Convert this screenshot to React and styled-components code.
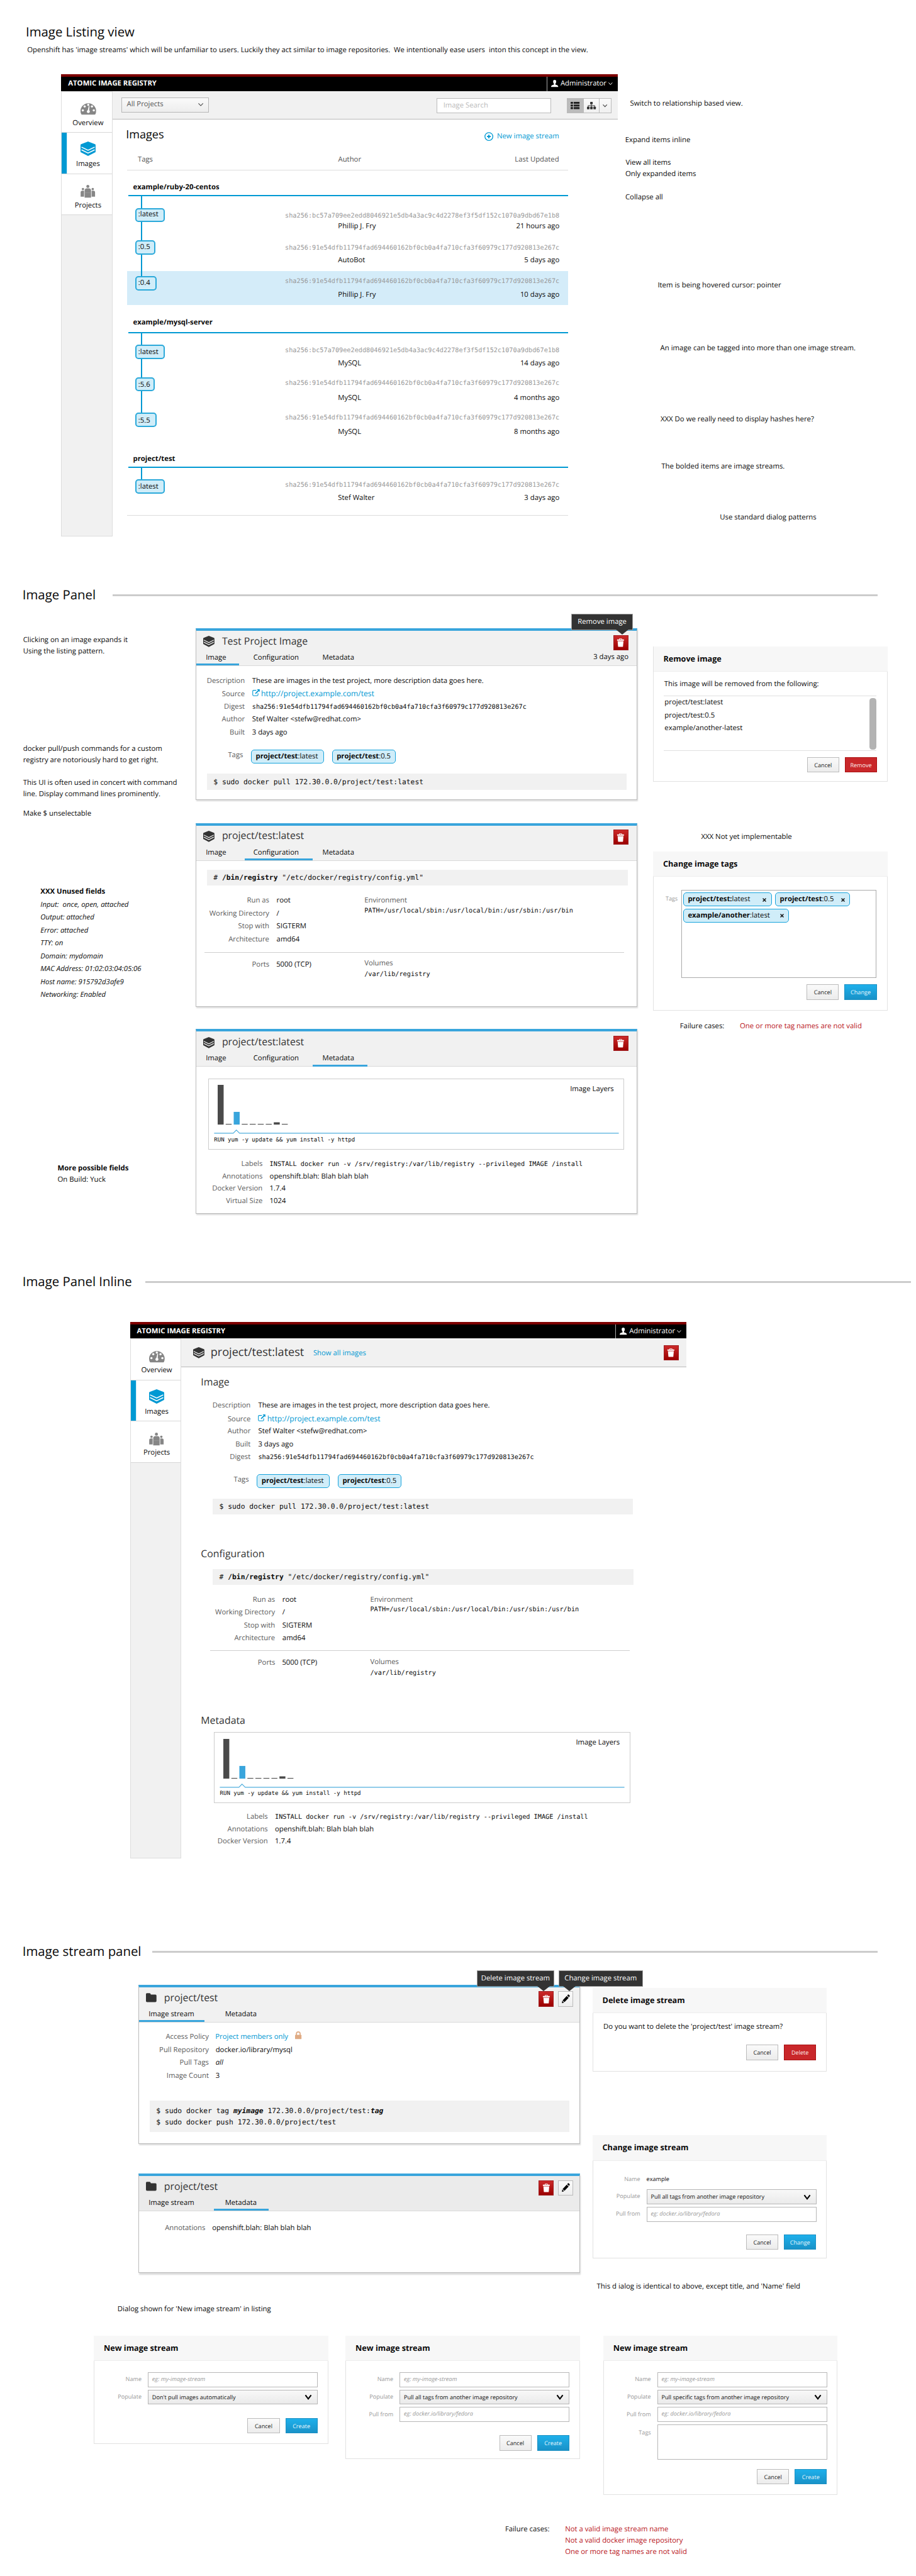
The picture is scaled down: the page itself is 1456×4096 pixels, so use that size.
import React from "react";
import styled, { createGlobalStyle, css } from "styled-components";

const SANS = '"Open Sans", "Noto Sans", sans-serif';
const MONO = '"DejaVu Sans Mono", monospace';
const BLUE = "#0099d3";
const PANEL_BLUE = "#39a5dc";

const GlobalStyle = createGlobalStyle`
  body { margin: 0; background: #fff; }
  *, *::before, *::after { box-sizing: border-box; }
`;

/* ---------- page scaffolding ---------- */

const Page = styled.div`
  zoom: 0.91;
  width: 1600px;
  height: 4500px;
  overflow: hidden;
  background: #fff;
  color: #0a0a0a;
  font: 12.45px/20px ${SANS};
  text-rendering: geometricPrecision;
  white-space: pre;
`;

const Columns = styled.div`
  display: flex;
  align-items: flex-start;
  height: ${(p) => (p.$height ? p.$height + "px" : "auto")};
  margin-top: ${(p) => p.$gap || 0}px;
  margin-left: ${(p) => p.$indent || 0}px;
`;

const Column = styled.div`
  display: flex;
  flex-direction: column;
  flex: none;
  width: ${(p) => p.$width}px;
`;

const PageTitle = styled.h1`
  margin: ${(p) => p.$gap || 0}px 0 0 45px;
  font-size: 22.4px;
  font-weight: 400;
  line-height: 30.8px;
`;

const SectionHead = styled.div`
  display: flex;
  align-items: center;
  height: 30px;
  margin: ${(p) => p.$gap}px 0 0 39.3px;
`;

const SectionTitle = styled.h2`
  flex: none;
  width: ${(p) => p.$width}px;
  margin: 0;
  font-size: 22.4px;
  font-weight: 400;
  line-height: 30.8px;
`;

const Rule = styled.div`
  width: ${(p) => p.$width}px;
  height: 3.2px;
  margin-top: 4px;
  background: #ccc;
`;

const Note = styled.p`
  margin: ${(p) => p.$gap || 0}px 0 0 ${(p) => p.$indent || 0}px;
  font-size: 12.52px;
  line-height: 20px;
  font-weight: ${(p) => (p.$bold ? 700 : 400)};
  font-style: ${(p) => (p.$italic ? "italic" : "normal")};
`;

const Failures = styled.div`
  display: flex;
  margin: ${(p) => p.$gap}px 0 0 ${(p) => p.$indent}px;
  & > span {
    width: 104.7px;
  }
  & > div {
    color: #b9151b;
  }
`;

/* ---------- icons ---------- */

const Glyph = styled.svg`
  display: block;
  flex: none;
  overflow: visible;
`;

const StackIcon = ({ w = 26.3, h = 25.3, bg = "#fff", color = BLUE }) => (
  <Glyph width={w} height={h} viewBox="0 0 26 25" preserveAspectRatio="none">
    <path d="M13 0 L25 4.6 Q26 5 26 6 V17.6 Q26 18.4 25.2 18.8 L13 25 L.8 18.8 Q0 18.4 0 17.6 V6 Q0 5 1 4.6z" fill={color} />
    <path d="M1.6 9.6 L13 15.2 L24.4 9.6 M1.6 14.4 L13 20 L24.4 14.4" fill="none" stroke={bg} strokeWidth="1.7" />
  </Glyph>
);

const GaugeIcon = () => (
  <Glyph width="27.2" height="21.3" viewBox="0 0 27 21">
    <path d="M2.4 21 Q1.6 21 1.2 20.2 A13.5 13.4 0 1 1 25.8 20.2 Q25.4 21 24.6 21z" fill="#868686" />
    <g fill="#fff">
      <circle cx="4" cy="13.6" r="1.9" />
      <circle cx="7.2" cy="6.8" r="1.9" />
      <circle cx="13.4" cy="4" r="1.9" />
      <circle cx="19.8" cy="6.8" r="1.9" />
      <circle cx="23" cy="13.6" r="1.9" />
      <path d="M14.4 6 L15.6 6.2 L14.9 13.4 A2.6 2.6 0 1 1 12.6 13.2z" />
    </g>
  </Glyph>
);

const PeopleIcon = () => (
  <Glyph width="25.6" height="22.8" viewBox="0 0 26 23" fill="#868686">
    <circle cx="13" cy="2.6" r="2.7" />
    <circle cx="4.3" cy="7.2" r="2.1" />
    <circle cx="21.7" cy="7.2" r="2.1" />
    <path d="M7.3 22.6 V10.2 Q7.3 6.4 11 6.2 H15 Q18.7 6.4 18.7 10.2 V22.6z" />
    <path d="M.2 21 V13.4 Q.2 10.2 3 10.2 H6.3 V21z M25.8 21 V13.4 Q25.8 10.2 23 10.2 H19.7 V21z" />
    <path d="M7.3 14 H18.7" stroke="#a5a5a5" strokeWidth=".5" />
  </Glyph>
);

const TrashIcon = () => (
  <Glyph width="14" height="15" viewBox="0 0 14 15" fill="#fff">
    <path d="M4.4 2 V1 Q4.4 .2 5.2 .2 H8.8 Q9.6 .2 9.6 1 V2 H13 V4 H1 V2z M5.4 2 H8.6 V1.2 H5.4z" fillRule="evenodd" />
    <path d="M1.9 5 H12.1 L11.3 14.2 Q11.2 14.8 10.6 14.8 H3.4 Q2.8 14.8 2.7 14.2z" />
  </Glyph>
);

const PencilIcon = () => (
  <Glyph width="14" height="16" viewBox="0 0 14 16" fill="#000">
    <path d="M.2 15.6 L.8 11.4 L3.8 14.7z M1.4 10.6 L8.6 3 L11.9 6.2 L4.7 13.8z M9.4 2.1 L10.9 .6 Q11.6 0 12.3 .7 L13.7 2.1 Q14.3 2.8 13.7 3.6 L12.6 5.2z" />
  </Glyph>
);

const FolderIcon = () => (
  <Glyph width="18.4" height="16" viewBox="0 0 18.4 16">
    <path d="M0 2 Q0 .4 1.6 .2 H6.2 Q7.6 .3 8 1.4 L8.5 2.8 H16.6 Q18.4 2.9 18.4 4.6 V14 Q18.4 16 16.4 16 H2 Q0 16 0 14z" fill="#333" />
  </Glyph>
);

const LockIcon = () => (
  <Glyph width="11.2" height="13.6" viewBox="0 0 11.2 13.6">
    <path d="M2.4 7 V4 Q2.4 .9 5.6 .9 T8.8 4 V7" fill="none" stroke="#dfab84" strokeWidth="1.9" />
    <rect y="6" width="11.2" height="7.6" rx=".8" fill="#dfab84" />
  </Glyph>
);

const ExternalIcon = () => (
  <Glyph width="13" height="12" viewBox="0 0 13 12">
    <path d="M7 1.8 H2.4 Q.8 1.8 .8 3.4 V9.6 Q.8 11.2 2.4 11.2 H8.4 Q10 11.2 10 9.6 V7" fill="none" stroke={BLUE} strokeWidth="1.2" />
    <path d="M8.2 0 H13 V4.8 L11.4 3.2 L6 8.2 L4.8 7 L10 1.8z" fill={BLUE} />
  </Glyph>
);

const AddIcon = () => (
  <Glyph width="15.6" height="15.6" viewBox="0 0 16 16">
    <circle cx="8" cy="8" r="7.1" fill="none" stroke={BLUE} strokeWidth="1.5" />
    <path d="M8 4.7 V11.3 M4.7 8 H11.3" stroke={BLUE} strokeWidth="2.2" />
  </Glyph>
);

const UserIcon = () => (
  <Glyph width="12.4" height="12.4" viewBox="0 0 12.4 12.4" fill="#fff">
    <path d="M6.2 0 Q9 0 8.9 3 Q8.8 5.6 7.5 6.6 V8.2 Q11.8 9.4 12.2 10.6 Q12.4 11.4 12.4 12.4 H0 Q0 11.4 .2 10.6 Q.6 9.4 4.9 8.2 V6.6 Q3.6 5.6 3.5 3 Q3.4 0 6.2 0z" />
  </Glyph>
);

const ListIcon = () => (
  <Glyph width="15.6" height="12.6" viewBox="0 0 15.6 12.6" fill="#222">
    {[0, 4.6, 9.2].map((y) => (
      <g key={y}>
        <rect y={y} width="4.2" height="3.4" rx=".6" />
        <rect x="5.4" y={y} width="10.2" height="3.4" rx=".6" />
      </g>
    ))}
  </Glyph>
);

const TreeIcon = () => (
  <Glyph width="15.6" height="13" viewBox="0 0 15.6 13" fill="#333">
    <rect x="5.6" width="4.4" height="4.2" rx=".6" />
    <rect y="8.6" width="4.4" height="4.2" rx=".6" />
    <rect x="5.6" y="8.6" width="4.4" height="4.2" rx=".6" />
    <rect x="11.2" y="8.6" width="4.4" height="4.2" rx=".6" />
    <path d="M7.8 3.8 V9 M2.2 9 V6.6 H13.4 V9" fill="none" stroke="#333" strokeWidth="1.1" />
  </Glyph>
);

const Chevron = ({ w = 8, h = 4.6, color = "#444", stroke = 1.2 }) => (
  <Glyph width={w} height={h} viewBox={`0 0 ${w} ${h}`}>
    <path d={`M.5 .4 L${w / 2} ${h - 0.5} L${w - 0.5} .4`} fill="none" stroke={color} strokeWidth={stroke} />
  </Glyph>
);

/* ---------- application window ---------- */

const Window = styled.div`
  flex: none;
  width: 972px;
`;

const TopBar = styled.div`
  display: flex;
  justify-content: space-between;
  height: 29px;
  border-top: 4.4px solid #7d0000;
  background: #000;
  color: #fff;
`;

const Brand = styled.div`
  padding-left: 12px;
  font-weight: 700;
  line-height: 25px;
`;

const UserMenu = styled.div`
  display: flex;
  align-items: center;
  width: 124px;
  padding: 0 0 1px 6px;
  border-left: 1px solid #aaa;
  & > span {
    margin: 0 3.4px 0 4.6px;
  }
`;

const WindowBody = styled.div`
  display: flex;
  height: ${(p) => p.$height}px;
`;

const Sidebar = styled.nav`
  flex: none;
  width: 89.5px;
  border: 1px solid #ddd;
  background: #f1f1f1;
`;

const NavItem = styled.div`
  display: flex;
  flex-direction: column;
  align-items: center;
  height: 72px;
  padding-left: 4px;
  border-bottom: 1px solid #d8d8d8;
  background: #fff;
  ${(p) => p.$active && css`box-shadow: inset 9px 0 0 ${BLUE};`}
`;

const NavIcon = styled.div`
  display: flex;
  align-items: flex-end;
  height: 45px;
  padding-bottom: ${(p) => p.$lift || 4.5}px;
`;

const Main = styled.div`
  flex: 1;
`;

const Toolbar = styled.div`
  display: flex;
  align-items: flex-start;
  height: 50px;
  border-bottom: 1px solid #b9b9b9;
  background: #f1f1f1;
`;

const ProjectSelect = styled.div`
  display: flex;
  align-items: center;
  justify-content: space-between;
  width: 152.8px;
  height: 26.4px;
  margin: 11.3px 0 0 15.5px;
  padding: 0 8px 1px 8.4px;
  border: 1px solid #b7b7b7;
  background: linear-gradient(#fafafa, #ededed);
  color: #555;
`;

const SearchBox = styled.div`
  width: 200.7px;
  height: 25.8px;
  margin: 13px 0 0 397.5px;
  padding-left: 11px;
  border: 1px solid #bbb;
  background: #fff;
  color: #bbb;
  line-height: 25px;
`;

const ViewSwitch = styled.div`
  display: grid;
  grid-template-columns: 29.3px 28.2px 20.2px;
  height: 25.8px;
  margin: 13px 0 0 27px;
`;

const ViewButton = styled.div`
  display: flex;
  align-items: center;
  justify-content: center;
  border: solid #bbb;
  border-width: 1px 1px 1px ${(p) => (p.$first ? 1 : 0)}px;
  background: ${(p) => (p.$active ? "#bbb" : "linear-gradient(#fafafa, #f0f0f0)")};
`;

const AppWindow = ({ height, toolbar, children }) => (
  <Window>
    <TopBar>
      <Brand>ATOMIC IMAGE REGISTRY</Brand>
      <UserMenu>
        <UserIcon />
        <span>Administrator</span>
        <Chevron w={7.4} h={4.6} color="#fff" stroke={1.1} />
      </UserMenu>
    </TopBar>
    <WindowBody $height={height}>
      <Sidebar>
        <NavItem>
          <NavIcon><GaugeIcon /></NavIcon>
          Overview
        </NavItem>
        <NavItem $active>
          <NavIcon><StackIcon /></NavIcon>
          Images
        </NavItem>
        <NavItem>
          <NavIcon $lift={2.8}><PeopleIcon /></NavIcon>
          Projects
        </NavItem>
      </Sidebar>
      <Main>
        <Toolbar>{toolbar}</Toolbar>
        {children}
      </Main>
    </WindowBody>
  </Window>
);

/* ---------- image listing ---------- */

const Listing = styled.div`
  width: 770.5px;
  margin-left: 25.5px;
  border-bottom: 1px solid #ddd;
`;

const ListingHead = styled.div`
  display: flex;
  align-items: flex-end;
  justify-content: space-between;
  padding: 13.3px 15.8px 0 0;
  & > h3 {
    margin: 0 0 0 -2px;
    font-size: 19.9px;
    font-weight: 400;
    line-height: 26.5px;
  }
`;

const IconLink = styled.a`
  display: flex;
  align-items: center;
  gap: 6.5px;
  color: ${BLUE};
`;

const ColumnHeads = styled.div`
  display: grid;
  grid-template-columns: 368.7px 1fr auto;
  height: 28.6px;
  margin-top: 20.7px;
  padding: 0 16px 0 0;
  border-bottom: 1px solid #ddd;
  color: #555;
  & > :first-child {
    padding-left: 18.6px;
  }
`;

const StreamName = styled.div`
  margin: ${(p) => p.$gap}px 0 0 2.5px;
  padding: 0 0 ${(p) => p.$pad}px 8px;
  border-bottom: 2.5px solid ${BLUE};
  font-weight: 700;
`;

const ImageRow = styled.div`
  display: grid;
  grid-template-columns: 150px 1fr;
  height: ${(p) => p.$height}px;
  padding-right: 15.3px;
  background: ${(p) => (p.$hovered ? "#d4ecf9" : "transparent")};
`;

const RailCell = styled.div`
  display: flex;
  flex-direction: column;
  align-items: flex-start;
`;

const Rail = styled.div`
  flex: ${(p) => (p.$height ? "none" : "1")};
  width: 2px;
  height: ${(p) => (p.$height ? p.$height + "px" : "auto")};
  margin-left: 24.2px;
  background: ${BLUE};
`;

const ShortTag = styled.div`
  width: ${(p) => p.$width}px;
  height: 25.2px;
  margin-left: 13.8px;
  padding-left: 3.6px;
  border: 2.2px solid #2ba9da;
  border-radius: 5.5px;
  background: #d0edf9;
  line-height: ${(p) => p.$line}px;
`;

const ImageInfo = styled.div`
  padding-top: ${(p) => p.$top}px;
`;

const ShortHash = styled.div`
  color: #999;
  font: 11.22px/16.5px ${MONO};
  text-align: right;
`;

const Meta = styled.div`
  display: flex;
  justify-content: space-between;
  padding: ${(p) => p.$gap}px 0 0 218.5px;
`;

const HASH_A = "sha256:bc57a709ee2edd8046921e5db4a3ac9c4d2278ef3f5df152c1070a9dbd67e1b8";
const HASH_B = "sha256:91e54dfb11794fad694460162bf0cb0a4fa710cfa3f60979c177d920813e267c";

const STREAMS = [
  {
    name: "example/ruby-20-centos", gap: 19.4, pad: 2.8,
    rows: [
      { tag: ":latest", w: 52.2, line: 18.6, rail: 20.8, h: 65.5, top: 26.3, gap: 0.4, hash: HASH_A, author: "Phillip J. Fry", when: "21 hours ago" },
      { tag: ":0.5", w: 35.5, line: 19.7, rail: 12, h: 65.3, top: 17.4, gap: 3.8, hash: HASH_B, author: "AutoBot", when: "5 days ago" },
      { tag: ":0.4", w: 38.2, line: 19.7, rail: 9, h: 59.7, top: 10.5, gap: 5.4, hash: HASH_B, author: "Phillip J. Fry", when: "10 days ago", hovered: true },
    ],
  },
  {
    name: "example/mysql-server", gap: 21.4, pad: 5.6,
    rows: [
      { tag: ":latest", w: 52.2, line: 21.1, rail: 19.8, h: 65.5, top: 22.3, gap: 4.4, hash: HASH_A, author: "MySQL", when: "14 days ago" },
      { tag: ":5.6", w: 35, line: 21.7, rail: 11.3, h: 62, top: 14.4, gap: 7.1, hash: HASH_B, author: "MySQL", when: "4 months ago" },
      { tag: ":5.5", w: 38, line: 23.7, rail: 11.3, h: 60, top: 12.8, gap: 6.7, hash: HASH_B, author: "MySQL", when: "8 months ago" },
    ],
  },
  {
    name: "project/test", gap: 22.4, pad: 3.7,
    rows: [
      { tag: ":latest", w: 52.2, line: 21.1, rail: 19.7, h: 82.7, top: 22.2, gap: 4.4, hash: HASH_B, author: "Stef Walter", when: "3 days ago" },
    ],
  },
];

const ImageListing = () => (
  <Listing>
    <ListingHead>
      <h3>Images</h3>
      <IconLink><AddIcon />New image stream</IconLink>
    </ListingHead>
    <ColumnHeads>
      <span>Tags</span>
      <span>Author</span>
      <span>Last Updated</span>
    </ColumnHeads>
    {STREAMS.map((stream) => (
      <React.Fragment key={stream.name}>
        <StreamName $gap={stream.gap} $pad={stream.pad}>{stream.name}</StreamName>
        {stream.rows.map((row, i) => (
          <ImageRow key={row.tag} $height={row.h} $hovered={row.hovered}>
            <RailCell>
              <Rail $height={row.rail} />
              <ShortTag $width={row.w} $line={row.line}>{row.tag}</ShortTag>
              {i < stream.rows.length - 1 && <Rail />}
            </RailCell>
            <ImageInfo $top={row.top}>
              <ShortHash>{row.hash}</ShortHash>
              <Meta $gap={row.gap}>
                <span>{row.author}</span>
                <span>{row.when}</span>
              </Meta>
            </ImageInfo>
          </ImageRow>
        ))}
      </React.Fragment>
    ))}
  </Listing>
);

/* ---------- expanded panels ---------- */

const Panel = styled.section`
  position: relative;
  width: 770.5px;
  height: ${(p) => p.$height}px;
  margin-top: ${(p) => p.$gap}px;
  border: 1px solid #bbb;
  border-top: 4.4px solid ${PANEL_BLUE};
  background: #fff;
  box-shadow: 1px ${(p) => (p.$deep ? 3 : 2)}px 2px rgba(0, 0, 0, 0.14);
`;

const PanelHeader = styled.header`
  height: 61.6px;
  border-bottom: 1px solid #d9d9d9;
  background: ${(p) => (p.$dark ? "#ebebeb" : "#f1f1f1")};
`;

const PanelTitle = styled.div`
  display: flex;
  align-items: flex-start;
  height: 35.2px;
  padding: 7.2px ${(p) => p.$inset}px 0 11.9px;
  & > h3 {
    flex: 1;
    margin: -2px 0 0 13px;
    color: #333;
    font-size: 17.45px;
    font-weight: 400;
    line-height: 24.3px;
  }
`;

const TitleIcon = styled.div`
  margin-top: ${(p) => p.$top}px;
`;

const IconButton = styled.div`
  display: flex;
  align-items: center;
  justify-content: center;
  width: 26.4px;
  height: 26.6px;
  margin-left: ${(p) => p.$gap || 0}px;
  border: 1px solid ${(p) => (p.$danger ? "#a01d20" : "#bbb")};
  background: ${(p) => (p.$danger ? "linear-gradient(#cb2a2a, #9b0000)" : "linear-gradient(#fafafa, #eee)")};
`;

const Tabs = styled.div`
  display: flex;
  height: 25.4px;
  padding-right: 13.8px;
`;

const Tab = styled.div`
  width: ${(p) => p.$width}px;
  height: 25.4px;
  margin-left: ${(p) => p.$gap || 0}px;
  padding: 2px 0 0 ${(p) => p.$pad}px;
  border-bottom: 3.4px solid ${(p) => (p.$active ? PANEL_BLUE : "transparent")};
`;

const Age = styled.span`
  margin-left: auto;
  padding-top: 1px;
`;

const Tooltip = styled.div`
  position: absolute;
  z-index: 2;
  top: -30px;
  left: ${(p) => p.$left}px;
  width: ${(p) => p.$width}px;
  height: 29px;
  border: 1px solid #9c9c9c;
  background: #333;
  color: #fff;
  line-height: 26px;
  text-align: center;
  &::after {
    content: "";
    position: absolute;
    top: 27px;
    left: ${(p) => p.$arrow}px;
    border: solid transparent;
    border-top-color: #333;
    border-width: 9.5px 11px 0;
  }
`;

const Fields = styled.div`
  margin-top: ${(p) => p.$gap}px;
  line-height: ${(p) => p.$step || 22.5}px;
`;

const Field = styled.div`
  display: flex;
  align-items: baseline;
  height: ${(p) => p.$step || 22.5}px;
`;

const Label = styled.span`
  flex: none;
  width: ${(p) => p.$width}px;
  margin-right: ${(p) => p.$space || 12.8}px;
  color: #5c5c5c;
  text-align: right;
`;

const Mono = styled.span`
  font-family: ${MONO};
  font-size: ${(p) => p.$size || 11.22}px;
`;

const UrlLink = styled.a`
  display: flex;
  align-items: baseline;
  gap: 2.6px;
  color: ${BLUE};
  font-size: 13.35px;
`;

const PolicyLink = styled.a`
  display: flex;
  align-items: baseline;
  gap: 12px;
  color: ${BLUE};
`;

const TagRow = styled.div`
  display: flex;
  margin-top: ${(p) => p.$gap}px;
`;

const Tag = styled.div`
  display: flex;
  width: ${(p) => p.$width}px;
  height: 24.2px;
  margin-right: ${(p) => (p.$space === undefined ? 14.4 : p.$space)}px;
  padding: 0 8px 0 7px;
  border: 1.2px solid #17a3dc;
  border-radius: 5.5px;
  background: #d0edf9;
  line-height: 22.2px;
  & > svg {
    margin: 8px 0 0 auto;
  }
`;

const Command = styled.div`
  width: ${(p) => p.$width || 733.3}px;
  margin: ${(p) => p.$gap}px 0 0 ${(p) => p.$indent || 18.3}px;
  padding: ${(p) => (p.$tall ? "7.6px" : "4.1px")} 0 ${(p) => (p.$tall ? "7px" : "4.1px")} 11.3px;
  background: #f1f1f1;
  font: 12.45px/20px ${MONO};
`;

const Split = styled.div`
  display: grid;
  grid-template-columns: 293.2px 1fr;
  margin-top: ${(p) => p.$gap}px;
`;

const Stacked = styled.div`
  padding-top: ${(p) => p.$top}px;
  color: #5c5c5c;
  line-height: 17px;
  & > span {
    display: block;
    margin-top: ${(p) => p.$space}px;
    color: #0a0a0a;
  }
`;

const Divider = styled.div`
  width: 733px;
  height: 1.2px;
  margin: ${(p) => p.$gap}px 0 0 14px;
  background: #cfcfcf;
`;

const ConfigDetails = ({ dividerGap }) => (
  <>
    <Split $gap={15.4}>
      <div>
        {[["Run as", "root"], ["Working Directory", "/"], ["Stop with", "SIGTERM"], ["Architecture", "amd64"]].map(([k, v]) => (
          <Field key={k}>
            <Label $width={127}>{k}</Label>
            {v}
          </Field>
        ))}
      </div>
      <Stacked $top={2} $space={1.2}>
        Environment
        <Mono>PATH=/usr/local/sbin:/usr/local/bin:/usr/sbin:/usr/bin</Mono>
      </Stacked>
    </Split>
    <Divider $gap={dividerGap} />
    <Split $gap={9.8}>
      <Field>
        <Label $width={127.3} $space={12}>Ports</Label>
        5000 (TCP)
      </Field>
      <Stacked $top={0.8} $space={2.8}>
        Volumes
        <Mono>/var/lib/registry</Mono>
      </Stacked>
    </Split>
  </>
);

const LayerBox = styled.div`
  width: 726.8px;
  height: 124.2px;
  margin: ${(p) => p.$gap}px 0 0 20.3px;
  border: 1px solid #ccc;
`;

const LayerTop = styled.div`
  display: flex;
  justify-content: space-between;
  align-items: flex-start;
  height: 88px;
  padding: 7.5px 17px 0 15px;
  & > svg {
    margin-top: 2.5px;
  }
`;

const LayerCommand = styled.div`
  padding: 4px 0 0 9.2px;
  font: 9.98px/14px ${MONO};
`;

const Bar = styled.rect`
  fill: ${(p) => (p.$selected ? PANEL_BLUE : "#4a4a4a")};
`;

const LAYERS = [69.4, 1.2, 22.2, 1.2, 1.2, 1.2, 1.2, 4, 1.2];

const LayerChart = ({ gap }) => (
  <LayerBox $gap={gap}>
    <LayerTop>
      <Glyph width="124" height="69.4">
        {LAYERS.map((h, i) => (
          <Bar key={i} x={i * 14} y={69.4 - h} width="10.4" height={h} $selected={i === 2} />
        ))}
      </Glyph>
      Image Layers
    </LayerTop>
    <Glyph width="716" height="8">
      <path d="M9.2 6.5 H42.6 L48 .8 L53.6 6.5 H716" fill="none" stroke="#4faedd" strokeWidth="1.3" />
    </Glyph>
    <LayerCommand>RUN yum -y update &amp;&amp; yum install -y httpd</LayerCommand>
  </LayerBox>
);

const LabelFields = ({ gap, width, virtualSize }) => (
  <Fields $gap={gap} $step={21.6}>
    <Field $step={21.6}>
      <Label $width={width} $space={12.4}>Labels</Label>
      <Mono>INSTALL docker run -v /srv/registry:/var/lib/registry --privileged IMAGE /install</Mono>
    </Field>
    <Field $step={21.6}>
      <Label $width={width} $space={12.4}>Annotations</Label>
      openshift.blah: Blah blah blah
    </Field>
    <Field $step={21.6}>
      <Label $width={width} $space={12.4}>Docker Version</Label>
      1.7.4
    </Field>
    {virtualSize && (
      <Field $step={21.6}>
        <Label $width={width} $space={12.4}>Virtual Size</Label>
        {virtualSize}
      </Field>
    )}
  </Fields>
);

const ImageTags = ({ gap, width }) => (
  <TagRow $gap={gap}>
    <Label $width={width} $space={14}>Tags</Label>
    <Tag $width={127}><b>project/test</b>:latest</Tag>
    <Tag $width={111}><b>project/test</b>:0.5</Tag>
  </TagRow>
);

const ConfigCommand = ({ gap }) => (
  <Command $gap={gap} $width={735.2}>
    # <b>/bin/registry</b> "/etc/docker/registry/config.yml"
  </Command>
);

const ImagePanel = ({ title, active, gap, height, age, tooltip, children }) => (
  <Panel $gap={gap} $height={height}>
    {tooltip}
    <PanelHeader>
      <PanelTitle $inset={14.2}>
        <TitleIcon $top={2}><StackIcon w={19.6} h={19.4} color="#333" bg="#f1f1f1" /></TitleIcon>
        <h3>{title}</h3>
        <IconButton $danger><TrashIcon /></IconButton>
      </PanelTitle>
      <Tabs>
        <Tab $width={74} $pad={16.2} $active={active === 0}>Image</Tab>
        <Tab $width={118.7} $pad={15} $gap={10.3} $active={active === 1}>Configuration</Tab>
        <Tab $width={95.7} $pad={17} $active={active === 2}>Metadata</Tab>
        {age && <Age>{age}</Age>}
      </Tabs>
    </PanelHeader>
    {children}
  </Panel>
);

const StreamPanel = ({ active, gap, height, dark, tooltips, children }) => (
  <Panel $gap={gap} $height={height} $deep={dark}>
    {tooltips}
    <PanelHeader $dark={dark}>
      <PanelTitle $inset={10.6}>
        <TitleIcon $top={2.4}><FolderIcon /></TitleIcon>
        <h3>project/test</h3>
        <IconButton $danger><TrashIcon /></IconButton>
        <IconButton $gap={7.4}><PencilIcon /></IconButton>
      </PanelTitle>
      <Tabs>
        <Tab $width={114} $pad={16.2} $active={active === 0}>Image stream</Tab>
        <Tab $width={96} $pad={20} $gap={15.8} $active={active === 1}>Metadata</Tab>
      </Tabs>
    </PanelHeader>
    {children}
  </Panel>
);

/* ---------- inline view ---------- */

const InlineTitle = styled.h3`
  margin: 10.1px 0 0 11.2px;
  color: #333;
  font-size: 19.9px;
  font-weight: 400;
  line-height: 26.5px;
`;

const ToolbarIcon = styled.div`
  margin: 15.4px 0 0 20.6px;
`;

const ToolbarLink = styled.a`
  margin: 15.7px auto 0 16px;
  color: ${BLUE};
`;

const ToolbarAction = styled.div`
  margin: 11.8px 13.6px 0 0;
`;

const InlineBody = styled.div`
  padding-left: 37px;
`;

const InlineHeading = styled.h4`
  margin: ${(p) => p.$gap}px 0 0 -2.6px;
  color: #333;
  font-size: 17.45px;
  font-weight: 400;
  line-height: 24.3px;
`;

/* ---------- dialogs ---------- */

const Dialog = styled.section`
  flex: none;
  width: 409.5px;
  height: ${(p) => p.$height}px;
  margin: ${(p) => p.$gap || 0}px 0 0 ${(p) => p.$indent || 0}px;
  border: 1px solid #e2e2e2;
  border-top: 0;
  background: #fff;
`;

const DialogTitle = styled.h4`
  height: 44px;
  margin: 0 -1px;
  padding-left: 17.4px;
  border-bottom: 1px solid #eee;
  background: #f7f7f7;
  font-size: 13.9px;
  line-height: 43.2px;
`;

const DialogText = styled.p`
  margin: ${(p) => p.$gap}px 0 0 18px;
`;

const ScrollList = styled.div`
  display: flex;
  justify-content: space-between;
  width: 371.6px;
  height: 97.4px;
  margin: 9.1px 0 0 17.2px;
  padding: 0.6px 0 0 1.4px;
  border: solid #e0e0e0;
  border-width: 1px 0;
  line-height: 22.45px;
`;

const ScrollThumb = styled.div`
  width: 12.2px;
  height: 91px;
  margin-top: 2.6px;
  border-radius: 5px;
  background: #b3b3b3;
`;

const Actions = styled.div`
  display: flex;
  justify-content: flex-end;
  gap: 9.9px;
  margin: ${(p) => p.$gap}px 17.6px 0 0;
`;

const BUTTON_LOOKS = {
  plain: css`
    border-color: #bbb;
    background: linear-gradient(#fafafa, #ececec);
    color: #222;
  `,
  danger: css`
    border-color: #a11;
    background: #c9272a;
    color: #fbe9e9;
  `,
  primary: css`
    border-color: #1a8fc2;
    background: linear-gradient(#1eb0eb, #1992c8);
    color: #e6f5fc;
  `,
};

const Button = styled.div`
  width: 56.2px;
  height: 26.5px;
  border: 1px solid;
  font-size: 10px;
  line-height: 25.4px;
  text-align: center;
  ${(p) => BUTTON_LOOKS[p.$look || "plain"]}
`;

const Form = styled.div`
  display: flex;
  flex-direction: column;
  gap: 4.5px;
  padding-top: ${(p) => p.$top || 19.7}px;
  font-size: 10px;
`;

const FormRow = styled.div`
  display: flex;
`;

const FormLabel = styled.span`
  width: ${(p) => p.$width || 82.4}px;
  margin-right: ${(p) => p.$space || 11}px;
  padding-top: ${(p) => p.$top || 2.5}px;
  color: #999;
  text-align: right;
`;

const Input = styled.div`
  width: 296.9px;
  height: ${(p) => p.$height || 26}px;
  padding-left: 6.4px;
  border: 1px solid #b7b7b7;
  background: #fff;
  color: #999;
  font-style: italic;
  line-height: 22.2px;
`;

const Select = styled.div`
  display: flex;
  align-items: center;
  justify-content: space-between;
  width: 296.9px;
  height: 26px;
  padding: 0.6px 10px 0 6.4px;
  border: 1px solid #b7b7b7;
  background: linear-gradient(#f8f8f8, #eaeaea);
  color: #111;
`;

const PlainValue = styled.div`
  height: 26px;
  padding-top: 2.5px;
`;

const TagArea = styled.div`
  display: flex;
  flex-wrap: wrap;
  align-content: flex-start;
  gap: 3.6px 6.3px;
  width: 340.6px;
  height: 154.3px;
  padding: 3.6px 0 0 2.2px;
  border: 1px solid #aaa;
  font-size: 12.45px;
`;

const CloseMark = () => (
  <Glyph width="6.6" height="6.6" viewBox="0 0 6.6 6.6">
    <path d="M.6 .6 L6 6 M6 .6 L.6 6" stroke="#111" strokeWidth="1.6" />
  </Glyph>
);

const StreamForm = ({ name, populate, pullFrom, tags }) => (
  <Form>
    <FormRow>
      <FormLabel>Name</FormLabel>
      {name ? <PlainValue>{name}</PlainValue> : <Input>eg: my-image-stream</Input>}
    </FormRow>
    <FormRow>
      <FormLabel>Populate</FormLabel>
      <Select>
        {populate}
        <Chevron w={11} h={7.4} color="#000" stroke={2.3} />
      </Select>
    </FormRow>
    {pullFrom && (
      <FormRow>
        <FormLabel>Pull from</FormLabel>
        <Input>eg: docker.io/library/fedora</Input>
      </FormRow>
    )}
    {tags && (
      <FormRow>
        <FormLabel $top={4.1}>Tags</FormLabel>
        <Input $height={61} />
      </FormRow>
    )}
  </Form>
);

const FormActions = ({ gap, label, look = "primary" }) => (
  <Actions $gap={gap}>
    <Button>Cancel</Button>
    <Button $look={look}>{label}</Button>
  </Actions>
);

/* ---------- sections ---------- */

const ListingSection = () => (
  <>
    <PageTitle $gap={39.9}>Image Listing view</PageTitle>
    <Note $gap={7} $indent={47.5}>
      {"Openshift has 'image streams' which will be unfamiliar to users. Luckily they act similar to image repositories.  We intentionally ease users  inton this concept in the view."}
    </Note>
    <Columns $gap={32.3} $indent={107} $height={807.6}>
      <AppWindow
        height={778.6}
        toolbar={
          <>
            <ProjectSelect>All Projects<Chevron w={9} h={5} /></ProjectSelect>
            <SearchBox>Image Search</SearchBox>
            <ViewSwitch>
              <ViewButton $first $active><ListIcon /></ViewButton>
              <ViewButton><TreeIcon /></ViewButton>
              <ViewButton><Chevron /></ViewButton>
            </ViewSwitch>
          </>
        }
      >
        <ImageListing />
      </AppWindow>
      <Column $width={500}>
        <Note $gap={41.7} $indent={21.6}>Switch to relationship based view.</Note>
        <Note $gap={43} $indent={13}>Expand items inline</Note>
        <Note $gap={20} $indent={13.8}>View all items</Note>
        <Note $indent={13.2}>Only expanded items</Note>
        <Note $gap={20} $indent={13.2}>Collapse all</Note>
        <Note $gap={134.3} $indent={69.8}>Item is being hovered cursor: pointer</Note>
        <Note $gap={89.7} $indent={74.4}>An image can be tagged into more than one image stream.</Note>
        <Note $gap={104} $indent={74.8}>XXX Do we really need to display hashes here?</Note>
        <Note $gap={63} $indent={76.3}>The bolded items are image streams.</Note>
        <Note $gap={69.3} $indent={178.4}>Use standard dialog patterns</Note>
      </Column>
    </Columns>
  </>
);

const PanelSection = () => (
  <>
    <SectionHead $gap={85.8}>
      <SectionTitle $width={157}>Image Panel</SectionTitle>
      <Rule $width={1336.7} />
    </SectionHead>
    <Columns $indent={40.3} $height={1067.2}>
      <Column $width={301.9}>
        <Note $gap={55.5}>Clicking on an image expands it<br />Using the listing pattern.</Note>
        <Note $gap={150}>docker pull/push commands for a custom<br />registry are notoriously hard to get right.</Note>
        <Note $gap={19.7}>This UI is often used in concert with command<br />line. Display command lines prominently.</Note>
        <Note $gap={13.1}>Make $ unselectable</Note>
        <Note $gap={117} $indent={30.4} $bold>XXX Unused fields</Note>
        {[
          "Input:  once, open, attached", "Output: attached", "Error: attached", "TTY: on", "Domain: mydomain",
          "MAC Address: 01:02:03:04:05:06", "Host name: 915792d3afe9", "Networking: Enabled",
        ].map((text) => (
          <Note key={text} $gap={2.5} $indent={30.4} $italic>{text}</Note>
        ))}
        <Note $gap={283.3} $indent={60.2} $bold>More possible fields</Note>
        <Note $indent={60.2}>On Build: Yuck</Note>
      </Column>
      <Column $width={770.5}>
        <ImagePanel
          title="Test Project Image"
          active={0}
          gap={44.5}
          height={299.6}
          age="3 days ago"
          tooltip={<Tooltip $left={654.7} $width={107.6} $arrow={77}>Remove image</Tooltip>}
        >
          <Fields $gap={15}>
            <Field><Label $width={84.3}>Description</Label>These are images in the test project, more description data goes here.</Field>
            <Field><Label $width={84.3}>Source</Label><UrlLink><ExternalIcon />http://project.example.com/test</UrlLink></Field>
            <Field><Label $width={84.3}>Digest</Label><Mono>{HASH_B}</Mono></Field>
            <Field><Label $width={84.3}>Author</Label>{"Stef Walter <stefw@redhat.com>"}</Field>
            <Field><Label $width={84.3}>Built</Label>3 days ago</Field>
          </Fields>
          <ImageTags gap={19.1} width={81.4} />
          <Command $gap={17}>$ sudo docker pull 172.30.0.0/project/test:latest</Command>
        </ImagePanel>
        <ImagePanel title="project/test:latest" active={1} gap={40.7} height={321.1}>
          <ConfigCommand gap={15.2} />
          <Fields $gap={0}><ConfigDetails dividerGap={10.5} /></Fields>
        </ImagePanel>
        <ImagePanel title="project/test:latest" active={2} gap={39} height={322.3}>
          <LayerChart gap={20.6} />
          <LabelFields gap={14} width={115.3} virtualSize="1024" />
        </ImagePanel>
      </Column>
      <Column $width={470}>
        <Dialog $gap={75.8} $indent={28.5} $height={236.8}>
          <DialogTitle>Remove image</DialogTitle>
          <DialogText $gap={12.9}>This image will be removed from the following:</DialogText>
          <ScrollList>
            <div>project/test:latest<br />project/test:0.5<br />example/another-latest</div>
            <ScrollThumb />
          </ScrollList>
          <FormActions gap={10.6} label="Remove" look="danger" />
        </Dialog>
        <Note $gap={86.3} $indent={112}>XXX Not yet implementable</Note>
        <Dialog $gap={15.2} $indent={28} $height={278.2}>
          <DialogTitle>Change image tags</DialogTitle>
          <Form $top={23.6}>
            <FormRow>
              <FormLabel $width={42} $space={6.4} $top={5.4}>Tags</FormLabel>
              <TagArea>
                <Tag $width={154.4} $space={0}><b>project/test:</b>latest<CloseMark /></Tag>
                <Tag $width={130.5} $space={0}><b>project/test</b>:0.5<CloseMark /></Tag>
                <Tag $width={184.5} $space={0}><b>example/another</b>:latest<CloseMark /></Tag>
              </TagArea>
            </FormRow>
          </Form>
          <FormActions gap={11} label="Change" />
        </Dialog>
        <Failures $gap={17.7} $indent={75}>
          <span>Failure cases:</span>
          <div>One or more tag names are not valid</div>
        </Failures>
      </Column>
    </Columns>
  </>
);

const InlineSection = () => (
  <>
    <SectionHead $gap={102.7}>
      <SectionTitle $width={214.7}>Image Panel Inline</SectionTitle>
      <Rule $width={1337} />
    </SectionHead>
    <Columns $gap={56.7} $indent={227} $height={936.8}>
      <AppWindow
        height={907.8}
        toolbar={
          <>
            <ToolbarIcon><StackIcon w={19.6} h={19.4} color="#333" bg="#f1f1f1" /></ToolbarIcon>
            <InlineTitle>project/test:latest</InlineTitle>
            <ToolbarLink>Show all images</ToolbarLink>
            <ToolbarAction><IconButton $danger><TrashIcon /></IconButton></ToolbarAction>
          </>
        }
      >
        <InlineBody>
          <InlineHeading $gap={13.8}>Image</InlineHeading>
          <Fields $gap={18.2}>
            <Field><Label $width={84.2} $space={13.4}>Description</Label>These are images in the test project, more description data goes here.</Field>
            <Field><Label $width={84.2} $space={13.4}>Source</Label><UrlLink><ExternalIcon />http://project.example.com/test</UrlLink></Field>
            <Field><Label $width={84.2} $space={13.4}>Author</Label>{"Stef Walter <stefw@redhat.com>"}</Field>
            <Field><Label $width={84.2} $space={13.4}>Built</Label>3 days ago</Field>
            <Field><Label $width={84.2} $space={13.4}>Digest</Label><Mono $size={11.27}>{HASH_B}</Mono></Field>
          </Fields>
          <ImageTags gap={18.7} width={81.3} />
          <Command $gap={17.6}>$ sudo docker pull 172.30.0.0/project/test:latest</Command>
          <InlineHeading $gap={55.7}>Configuration</InlineHeading>
          <ConfigCommand gap={15.2} />
          <Fields $gap={-0.6}><ConfigDetails dividerGap={8.9} /></Fields>
          <InlineHeading $gap={61.6}>Metadata</InlineHeading>
          <LayerChart gap={9.1} />
          <LabelFields gap={12.7} width={114.4} />
        </InlineBody>
      </AppWindow>
    </Columns>
  </>
);

const StreamSection = () => (
  <>
    <SectionHead $gap={147}>
      <SectionTitle $width={226.7}>Image stream panel</SectionTitle>
      <Rule $width={1267.3} />
    </SectionHead>
    <Columns $indent={242.2} $height={600.7}>
      <Column $width={770.8}>
        <StreamPanel
          active={0}
          gap={44.2}
          height={278.6}
          tooltips={
            <>
              <Tooltip $left={589.2} $width={136} $arrow={104.5}>Delete image stream</Tooltip>
              <Tooltip $left={732} $width={147.8} $arrow={7}>Change image stream</Tooltip>
            </>
          }
        >
          <Fields $gap={14.6}>
            <Field>
              <Label $width={121.5} $space={11.4}>Access Policy</Label>
              <PolicyLink>Project members only<LockIcon /></PolicyLink>
            </Field>
            <Field><Label $width={121.5} $space={11.8}>Pull Repository</Label>docker.io/library/mysql</Field>
            <Field><Label $width={121.5} $space={11.8}>Pull Tags</Label><i>all</i></Field>
            <Field><Label $width={121.5} $space={11.8}>Image Count</Label>3</Field>
          </Fields>
          <Command $gap={31.8} $tall>
            $ sudo docker tag <b><i>myimage</i></b> 172.30.0.0/project/test:<b><i>tag</i></b><br />
            $ sudo docker push 172.30.0.0/project/test
          </Command>
        </StreamPanel>
        <StreamPanel active={1} gap={51.4} height={173} dark>
          <Fields $gap={18.2}>
            <Field><Label $width={115.4} $space={12}>Annotations</Label>openshift.blah: Blah blah blah</Field>
          </Fields>
        </StreamPanel>
      </Column>
      <Column $width={540}>
        <Dialog $gap={50.1} $indent={21.8} $height={145.9}>
          <DialogTitle>Delete image stream</DialogTitle>
          <DialogText $gap={13.9}>Do you want to delete the 'project/test' image stream?</DialogText>
          <FormActions gap={21.3} label="Delete" look="danger" />
        </Dialog>
        <Dialog $gap={111.6} $indent={21.8} $height={215.1}>
          <DialogTitle>Change image stream</DialogTitle>
          <StreamForm name="example" populate="Pull all tags from another image repository" pullFrom />
          <FormActions gap={22.8} label="Change" />
        </Dialog>
        <Note $gap={39.6} $indent={29.4}>This d ialog is identical to above, except title, and 'Name' field</Note>
      </Column>
    </Columns>
    <Note $gap={0.5} $indent={205.3}>Dialog shown for 'New image stream' in listing</Note>
    <Columns $gap={36.3} $indent={163.8}>
      <Dialog $height={188.6}>
        <DialogTitle>New image stream</DialogTitle>
        <StreamForm populate="Don't pull images automatically" />
        <FormActions gap={24.3} label="Create" />
      </Dialog>
      <Dialog $height={215.4} $indent={30.2}>
        <DialogTitle>New image stream</DialogTitle>
        <StreamForm populate="Pull all tags from another image repository" pullFrom />
        <FormActions gap={23.6} label="Create" />
      </Dialog>
      <Dialog $height={277.7} $indent={40.6}>
        <DialogTitle>New image stream</DialogTitle>
        <StreamForm populate="Pull specific tags from another image repository" pullFrom tags />
        <FormActions gap={17} label="Create" />
      </Dialog>
    </Columns>
    <Failures $gap={50.7} $indent={882.3}>
      <span>Failure cases:</span>
      <div>Not a valid image stream name<br />Not a valid docker image repository<br />One or more tag names are not valid</div>
    </Failures>
  </>
);

export default function App() {
  return (
    <>
      <GlobalStyle />
      <Page>
        <ListingSection />
        <PanelSection />
        <InlineSection />
        <StreamSection />
      </Page>
    </>
  );
}
